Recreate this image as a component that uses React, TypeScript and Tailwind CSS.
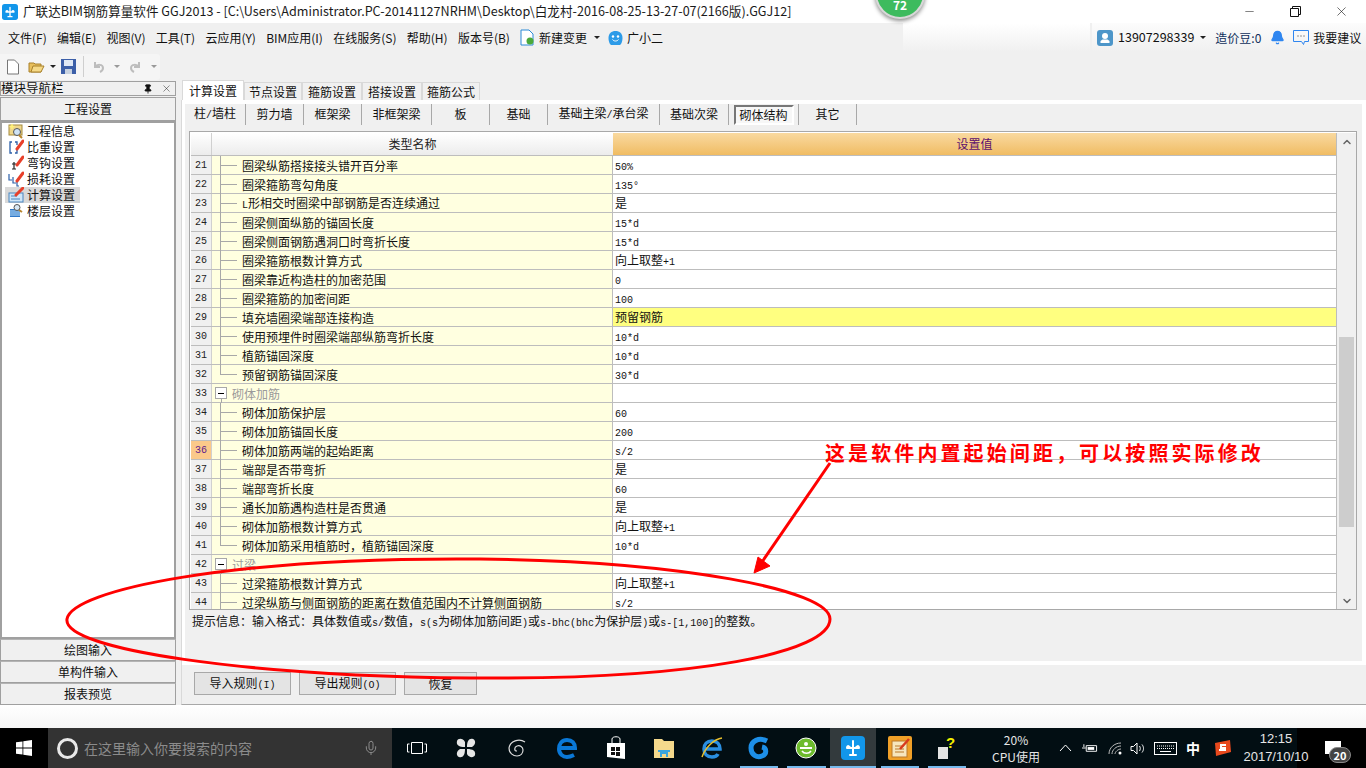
import type { ReactNode } from 'react';
import { Bell, ChevronDown, ChevronUp, Mic, Minus, Pin, X } from 'lucide-react';

const cjk = '"Noto Sans CJK SC", "Liberation Sans", sans-serif';

const menus = ['文件(F)', '编辑(E)', '视图(V)', '工具(T)', '云应用(Y)', 'BIM应用(I)', '在线服务(S)', '帮助(H)', '版本号(B)'];

const topTabs = [
  { label: '计算设置', w: 'w-[62px]' },
  { label: '节点设置', w: 'w-[58px]' },
  { label: '箍筋设置', w: 'w-[60px]' },
  { label: '搭接设置', w: 'w-[60px]' },
  { label: '箍筋公式', w: 'w-[58px]' },
];

const subTabs = [
  { label: '柱/墙柱', w: 'w-[61px]' },
  { label: '剪力墙', w: 'w-[58px]' },
  { label: '框架梁', w: 'w-[58px]' },
  { label: '非框架梁', w: 'w-[70px]' },
  { label: '板', w: 'w-[58px]' },
  { label: '基础', w: 'w-[58px]' },
  { label: '基础主梁/承台梁', w: 'w-[112px]' },
  { label: '基础次梁', w: 'w-[69px]' },
  { label: '砌体结构', w: 'w-[70px]' },
  { label: '其它', w: 'w-[58px]' },
];

type Row = { no: number; name: string; value?: string; group?: boolean; last?: boolean };

const rows: Row[] = [
  { no: 21, name: '圈梁纵筋搭接接头错开百分率', value: '50%' },
  { no: 22, name: '圈梁箍筋弯勾角度', value: '135°' },
  { no: 23, name: 'L形相交时圈梁中部钢筋是否连续通过', value: '是' },
  { no: 24, name: '圈梁侧面纵筋的锚固长度', value: '15*d' },
  { no: 25, name: '圈梁侧面钢筋遇洞口时弯折长度', value: '15*d' },
  { no: 26, name: '圈梁箍筋根数计算方式', value: '向上取整+1' },
  { no: 27, name: '圈梁靠近构造柱的加密范围', value: '0' },
  { no: 28, name: '圈梁箍筋的加密间距', value: '100' },
  { no: 29, name: '填充墙圈梁端部连接构造', value: '预留钢筋' },
  { no: 30, name: '使用预埋件时圈梁端部纵筋弯折长度', value: '10*d' },
  { no: 31, name: '植筋锚固深度', value: '10*d' },
  { no: 32, name: '预留钢筋锚固深度', value: '30*d', last: true },
  { no: 33, name: '砌体加筋', group: true },
  { no: 34, name: '砌体加筋保护层', value: '60' },
  { no: 35, name: '砌体加筋锚固长度', value: '200' },
  { no: 36, name: '砌体加筋两端的起始距离', value: 's/2' },
  { no: 37, name: '端部是否带弯折', value: '是' },
  { no: 38, name: '端部弯折长度', value: '60' },
  { no: 39, name: '通长加筋遇构造柱是否贯通', value: '是' },
  { no: 40, name: '砌体加筋根数计算方式', value: '向上取整+1' },
  { no: 41, name: '砌体加筋采用植筋时，植筋锚固深度', value: '10*d', last: true },
  { no: 42, name: '过梁', group: true },
  { no: 43, name: '过梁箍筋根数计算方式', value: '向上取整+1' },
  { no: 44, name: '过梁纵筋与侧面钢筋的距离在数值范围内不计算侧面钢筋', value: 's/2' },
];

const treeItems = [
  { label: '工程信息', icon: 'info' },
  { label: '比重设置', icon: 'weight' },
  { label: '弯钩设置', icon: 'hook' },
  { label: '损耗设置', icon: 'loss' },
  { label: '计算设置', icon: 'calc' },
  { label: '楼层设置', icon: 'floor' },
];

// 半角字符按等宽 6px 显示，和宋体的比例一致
function Mixed({ text }: { text: string }) {
  return (
    <span className="whitespace-nowrap">
      {text.split(/([\x00-\x7f°]+)/).map((part, i) =>
        i % 2 === 1 ? (
          <span key={i} className="font-['Liberation_Mono',monospace] text-[10px]">{part}</span>
        ) : (
          part
        ),
      )}
    </span>
  );
}

function AppLogo({ size = 16 }: { size?: number }) {
  return (
    <svg width={size} height={size} viewBox="0 0 24 24">
      <rect x="0" y="0" width="24" height="24" rx="4" fill="#1296ea" />
      <path d="M12 5v14M6 12h12M6 12c0-3 3-2 3 0M18 12c0-3-3-2-3 0M9 19h6" stroke="#fff" strokeWidth="2" fill="none" strokeLinecap="round" />
    </svg>
  );
}

function TreeIcon({ kind }: { kind: string }) {
  const pencil = <path d="M9 10 L15 2" stroke="#e8402a" strokeWidth="3" strokeLinecap="round" />;
  if (kind === 'info') {
    return (
      <svg width="16" height="16" viewBox="0 0 16 16">
        <rect x="1" y="2" width="13" height="10" fill="#efd78c" stroke="#a58a3c" />
        <circle cx="9" cy="9" r="3.5" fill="#cfe3f5" stroke="#555" />
        <path d="M11 12l3 3" stroke="#b8862e" strokeWidth="2" />
        <path d="M4 1v5M1.500 3.500h5" stroke="#fff27a" strokeWidth="1.500" />
      </svg>
    );
  }
  if (kind === 'weight') {
    return (
      <svg width="16" height="16" viewBox="0 0 16 16">
        <path d="M4 3H2v11h2M7 3h2v3M7 14h2v-5" stroke="#2c5fa8" strokeWidth="1.300" fill="none" />
        {pencil}
      </svg>
    );
  }
  if (kind === 'hook') {
    return (
      <svg width="16" height="16" viewBox="0 0 16 16">
        <path d="M6 7v7M4 9h4M4 14h4" stroke="#222" strokeWidth="1.200" fill="none" />
        {pencil}
      </svg>
    );
  }
  if (kind === 'loss') {
    return (
      <svg width="16" height="16" viewBox="0 0 16 16">
        <path d="M1 3v6h3M5 6v6h3M9 9v6h2" stroke="#2c5fa8" strokeWidth="1.200" fill="none" />
        {pencil}
      </svg>
    );
  }
  if (kind === 'calc') {
    return (
      <svg width="16" height="16" viewBox="0 0 16 16">
        <rect x="1" y="6" width="14" height="9" fill="#cfe6f8" stroke="#4a86c0" />
        <path d="M3 9h6M3 12h9" stroke="#4a86c0" />
        <path d="M8 8 L15 1" stroke="#e8402a" strokeWidth="3" strokeLinecap="round" />
      </svg>
    );
  }
  return (
    <svg width="16" height="16" viewBox="0 0 16 16">
      <path d="M2 6h10v8H2z" fill="#2f78c8" />
      <path d="M2 8h10M2 10h10M2 12h10" stroke="#bfe0fa" />
      <circle cx="9" cy="4.500" r="3" fill="#d8e8f5" stroke="#555" />
      <path d="M11 7l3 2" stroke="#b8862e" strokeWidth="2" />
    </svg>
  );
}

function Caret({ className = '', color = 'border-t-[#222]' }: { className?: string; color?: string }) {
  return <span className={`h-0 w-0 border-x-[3px] border-t-[3px] border-x-transparent ${color} ${className}`} />;
}

function TitleBar() {
  return (
    <div className="relative flex h-[23px] shrink-0 items-center bg-white pl-[2px] text-[12.6px] text-[#1a1a1a]">
      <AppLogo />
      <span className="ml-[5px] whitespace-nowrap">广联达BIM钢筋算量软件 GGJ2013 - [C:\Users\Administrator.PC-20141127NRHM\Desktop\白龙村-2016-08-25-13-27-07(2166版).GGJ12]</span>
      <div className="ml-auto mr-[2px] flex h-full items-center">
        <div className="flex w-[46px] justify-center"><Minus size={13} strokeWidth={1} /></div>
        <div className="flex w-[46px] justify-center">
          <svg width="11" height="11" viewBox="0 0 11 11" fill="none" stroke="#111">
            <path d="M.5 2.500h8v8h-8zM2.500 2.500v-2h8v8h-2" />
          </svg>
        </div>
        <div className="flex w-[46px] justify-center"><X size={15} strokeWidth={1} /></div>
      </div>
      {/* 悬浮的绿色网速球 */}
      <div className="absolute left-[875px] top-[-31px] flex h-[50px] w-[50px] items-end justify-center rounded-full border-2 border-[#d8d8d8] bg-[#3dbb5e] pb-[3px] text-[12px] font-bold text-white shadow-[0_2px_4px_rgba(0,0,0,0.45)]">
        72
      </div>
    </div>
  );
}

function MenuBar() {
  return (
    <div className="flex h-[29px] shrink-0 items-center bg-[#f0f0f0] pl-[8px] text-[12px] text-[#111]">
      <div className="flex w-[502px] shrink-0 justify-between whitespace-nowrap">
        {menus.map((m) => (
          <span key={m}>{m}</span>
        ))}
      </div>
      <svg className="ml-[10px]" width="14" height="17" viewBox="0 0 14 17">
        <path d="M1 1h8l4 4v11H1z" fill="#fff" stroke="#2b8ad6" />
        <circle cx="10" cy="12" r="3.500" fill="#4aa93a" />
      </svg>
      <span className="ml-[5px]">新建变更</span>
      <Caret className="ml-[7px]" />
      <svg className="ml-[7px]" width="17" height="16" viewBox="0 0 17 16">
        <path d="M8.500 1c4 0 7 2.500 7 7 0 3-1 6-2.500 7H4C2.500 14 1.500 11 1.500 8c0-4.500 3-7 7-7z" fill="#2d9be8" />
        <circle cx="6" cy="6.500" r="1.200" fill="#fff" />
        <circle cx="11" cy="6.500" r="1.200" fill="#fff" />
        <path d="M5.500 9.500c1.500 2 4.500 2 6 0" stroke="#fff" fill="none" />
      </svg>
      <span className="ml-[3px]">广小二</span>
      <div className="ml-auto h-full w-[187px] bg-gradient-to-b from-white to-[#f0f0f0]" />
      <div className="ml-[2px] flex h-full w-[274px] shrink-0 items-center bg-gradient-to-b from-[#fcfcfc] to-[#f0f0f0] pl-[5px]">
        <svg width="16" height="16" viewBox="0 0 16 16">
          <rect width="16" height="16" rx="3" fill="#4d96c9" />
          <circle cx="8" cy="6" r="3" fill="#fff" />
          <path d="M3.500 13h9v-2l-2-1.500h-5l-2 1.500z" fill="#fff" />
        </svg>
        <span className="ml-[5px] text-[12.5px]">13907298339</span>
        <Caret className="ml-[6px]" />
        <span className="ml-[9px] text-[#10305c]">造价豆:0</span>
        <Bell className="ml-[9px]" size={15} fill="#2f86f0" stroke="#2f86f0" />
        <svg className="ml-[8px]" width="16" height="16" viewBox="0 0 16 16" fill="none" stroke="#2f86f0">
          <path d="M.5 .5h15v11h-4l-1 3-2-3H.5z" />
          <path d="M4.500 6h1M7.500 6h1M10.500 6h1" stroke="#333" />
        </svg>
        <span className="ml-[4px]">我要建议</span>
      </div>
    </div>
  );
}

function ToolBar() {
  return (
    <div className="flex h-[29px] shrink-0 items-center bg-[#f0f0f0]">
      <div className="flex h-[26px] w-[160px] items-center rounded-r-[3px] bg-[#f5f5f5] pl-[6px]">
        <svg width="14" height="16" viewBox="0 0 14 16">
          <path d="M1.500 1h7l4 4v10h-11z" fill="#fff" stroke="#777" />
        </svg>
        <svg className="ml-[8px]" width="17" height="15" viewBox="0 0 17 15">
          <path d="M1 4h5l1 1h6v8H1z" fill="#e8bf5c" stroke="#a8802a" />
          <path d="M3 13l2-6h11l-3 6z" fill="#f5d987" stroke="#a8802a" />
        </svg>
        <Caret className="ml-[5px]" />
        <svg className="ml-[5px]" width="15" height="15" viewBox="0 0 15 15">
          <rect width="15" height="15" fill="#3c5fa8" />
          <rect x="3" y="1" width="9" height="6" fill="#dfe8f5" />
          <rect x="4" y="10" width="7" height="5" fill="#c8d2e0" />
        </svg>
        <span className="ml-[7px] h-[21px] w-px bg-[#cfcfcf]" />
        <div className="ml-[8px] flex items-center text-[#bdbdbd]">
          <svg width="14" height="14" viewBox="0 0 14 14" fill="none" stroke="currentColor" strokeWidth="2">
            <path d="M3 2v5h5M3 7c2-3 8-3 8 1 0 2-1 3-3 4" />
          </svg>
          <Caret className="ml-[8px]" color="border-t-[#999]" />
          <svg className="ml-[8px]" width="14" height="14" viewBox="0 0 14 14" fill="none" stroke="currentColor" strokeWidth="2">
            <path d="M11 2v5H6M11 7C9 4 3 4 3 8c0 2 1 3 3 4" />
          </svg>
          <Caret className="ml-[9px]" color="border-t-[#999]" />
        </div>
      </div>
    </div>
  );
}

function NavButton({ label }: { label: string }) {
  return (
    <div className="flex h-[22px] items-center justify-center border border-[#a0a0a0] border-t-[#b4b4b4] bg-[#f0f0f0] text-[12px] text-[#111]">
      {label}
    </div>
  );
}

function LeftPanel() {
  return (
    <aside className="flex w-[176px] shrink-0 flex-col">
      <div className="flex h-[15px] items-center border border-[#a0a0a0] bg-[#f0f0f0] text-[12.5px] leading-none text-[#111]">
        <span>模块导航栏</span>
        <Pin className="ml-auto" size={10} strokeWidth={2} fill="#111" />
        <X className="ml-[8px] mr-[3px]" size={11} strokeWidth={1} />
      </div>
      <div className="mt-px flex h-[24px] items-center justify-center border border-[#a0a0a0] bg-[#f0f0f0] text-[12px] text-[#111]">工程设置</div>
      <div className="h-[518px] border-2 border-[#a0a0a0] bg-white pl-[3px]">
        {treeItems.map((t) => (
          <div key={t.label} className={`flex h-[16px] w-[75px] items-center ${t.label === '计算设置' ? 'bg-[#d9d9d9]' : ''}`}>
            <span className="flex w-[22px] shrink-0 justify-center"><TreeIcon kind={t.icon} /></span>
            <span className="whitespace-nowrap text-[12px] leading-[16px] text-[#111]">{t.label}</span>
          </div>
        ))}
      </div>
      <NavButton label="绘图输入" />
      <NavButton label="单构件输入" />
      <NavButton label="报表预览" />
    </aside>
  );
}

function GridRow({ row }: { row: Row }) {
  const active = row.no === 36;
  const highlight = row.no === 29;
  return (
    <div className="flex h-[19px] shrink-0 border-b border-[#bdbdbd]">
      <div className={`flex w-[21px] shrink-0 items-center justify-center border-r border-[#d0d0d0] font-['Liberation_Mono',monospace] text-[10px] ${active ? 'bg-[#fbc98a] text-[#5c1a8c]' : 'bg-[#f0f0f0] text-[#222]'}`}>
        {row.no}
      </div>
      <div className="relative flex w-[401px] shrink-0 items-center border-r border-[#bdbdbd] bg-[#ffffe0] pl-[30px] pt-px text-[12px] text-[#111]">
        {row.group ? (
          <>
            <span className="absolute left-[3px] top-[3px] flex h-[12px] w-[12px] items-center justify-center border border-[#a8a8a8] bg-white">
              <span className="h-px w-[6px] bg-black" />
            </span>
            <span className="absolute left-[9px] top-[15px] h-[4px] w-px bg-[#a8a8a8]" />
            <span className="ml-[-10px] text-[#9a9a9a]">{row.name}</span>
          </>
        ) : (
          <>
            <span className={`absolute left-[8px] top-0 w-px bg-[#a8a8a8] ${row.last ? 'h-[9px]' : 'h-[19px]'}`} />
            <span className="absolute left-[8px] top-[9px] h-px w-[17px] bg-[#a8a8a8]" />
            <Mixed text={row.name} />
          </>
        )}
      </div>
      <div className={`flex flex-1 items-center pl-[2px] text-[12px] text-[#111] ${highlight ? 'bg-[#ffff80]' : 'bg-white'}`}>
        {row.value && <Mixed text={row.value} />}
      </div>
    </div>
  );
}

function SettingsGrid() {
  return (
    <div className="ml-[4px] mr-[5px] mt-[6px] flex h-[479px] shrink-0 border border-[#a8a8a8] bg-white pl-px pt-px">
      <div className="flex min-w-0 flex-1 flex-col overflow-hidden">
        <div className="flex h-[23px] shrink-0 border-b border-[#bdbdbd]">
          <div className="w-[21px] shrink-0 border-r border-[#d0d0d0] bg-gradient-to-b from-white to-[#ececec]" />
          <div className="flex w-[401px] shrink-0 items-center justify-center bg-gradient-to-b from-white to-[#ececec] text-[12px] text-[#222]">类型名称</div>
          <div className="flex flex-1 items-center justify-center bg-gradient-to-b from-[#f9d99f] to-[#f0bc62] text-[12px] text-[#5c0f6e]">设置值</div>
        </div>
        {rows.map((r) => (
          <GridRow key={r.no} row={r} />
        ))}
      </div>
      <div className="flex w-[20px] shrink-0 flex-col border-l border-[#bdbdbd] bg-[#f0f0f0] pl-[2px] pr-[2px]">
        <div className="flex h-[17px] items-center justify-center text-[#666]"><ChevronUp size={12} strokeWidth={3} /></div>
        <div className="mt-[187px] h-[190px] bg-[#cdcdcd]" />
        <div className="mt-auto flex h-[17px] items-center justify-center text-[#666]"><ChevronDown size={12} strokeWidth={3} /></div>
      </div>
    </div>
  );
}

function RulePanel() {
  const buttons = [
    { label: '导入规则(I)', w: 'w-[97px]' },
    { label: '导出规则(O)', w: 'w-[97px]' },
    { label: '恢复', w: 'w-[73px]' },
  ];
  return (
    <main className="ml-[5px] flex min-w-0 flex-1 flex-col">
      <div className="flex h-[19px] shrink-0 items-end pl-px text-[12px] text-[#111]">
        {topTabs.map((t, i) => (
          <div
            key={t.label}
            className={`flex items-center justify-center border border-b-0 border-[#d9d9d9] ${t.w} ${i === 0 ? 'h-[20px] bg-white' : 'h-[18px] bg-[#f0f0f0]'}`}
          >
            {t.label}
          </div>
        ))}
      </div>
      <div className="flex min-h-0 flex-1 flex-col border-b border-l border-[#a8a8a8] border-l-[#d9d9d9] bg-white">
        <div className="ml-[3px] mr-[4px] mt-[4px] flex h-[557px] flex-col bg-[#f0f0f0]">
          <div className="flex h-[21px] shrink-0 text-[12px] text-[#111]">
            {subTabs.map((t) => (
              <div key={t.label} className={`flex shrink-0 items-center justify-center border-r border-[#a8a8a8] ${t.w} ${t.label === '砌体结构' ? '' : 'pb-[2px]'}`}>
                {t.label === '砌体结构' ? (
                  <span className="flex h-[20px] w-[60px] items-center justify-center border-2 border-[#777] border-b-white border-r-white bg-[#f7f7f7]">{t.label}</span>
                ) : (
                  <Mixed text={t.label} />
                )}
              </div>
            ))}
          </div>
          <SettingsGrid />
          <p className="ml-[7px] mt-[2px] text-[12px] text-[#111]">
            <Mixed text="提示信息：输入格式：具体数值或s/数值，s(s为砌体加筋间距)或s-bhc(bhc为保护层)或s-[1,100]的整数。" />
          </p>
        </div>
        <div className="mt-[4px] flex flex-1 items-start gap-[8px] bg-[#f0f0f0] pl-[12px] pt-[7px]">
          {buttons.map((b) => (
            <div key={b.label} className={`flex h-[23px] items-center justify-center border border-[#a8a8a8] bg-[#e4e4e4] text-[12px] text-[#111] ${b.w}`}>
              <Mixed text={b.label} />
            </div>
          ))}
        </div>
      </div>
    </main>
  );
}

function Annotation() {
  return (
    <>
      <svg className="pointer-events-none absolute left-0 top-0" width="1366" height="768" viewBox="0 0 1366 768" fill="none">
        <path d="M67 619C72 590 230 557 480 559C680 561 830 590 830 619C830 652 700 680 470 678C250 676 62 650 67 619Z" stroke="#f00" strokeWidth="3" />
        <path d="M830 463L762 562" stroke="#f00" strokeWidth="3" />
        <path d="M754 573L758 557L770 566Z" fill="#f00" stroke="#f00" />
      </svg>
      <div className="absolute left-[825px] top-[438px] whitespace-nowrap font-['Noto_Sans_CJK_SC',serif] text-[20px] font-semibold tracking-[3.1px] text-[#f00]">
        这是软件内置起始间距，可以按照实际修改
      </div>
    </>
  );
}

function TaskIcon({ w, running, active, children }: { w: string; running?: string; active?: boolean; children: ReactNode }) {
  return (
    <div className={`relative flex h-full shrink-0 items-center justify-center ${w} ${active ? 'bg-[#333a3d]' : ''}`}>
      {children}
      {running && <span className={`absolute bottom-0 h-[2px] bg-[#76b9ed] ${running}`} />}
    </div>
  );
}

function Taskbar() {
  return (
    <footer className="flex h-[40px] shrink-0 items-center bg-[#020e13] text-white">
      <div className="flex h-full w-[48px] shrink-0 items-center justify-center bg-black">
        <svg width="16" height="16" viewBox="0 0 16 16" fill="#fff">
          <path d="M0 2.300 6.500 1.400v6.200H0zM7.300 1.300 16 0v7.600H7.300zM0 8.400h6.500v6.200L0 13.700zM7.300 8.400H16V16l-8.700-1.300z" />
        </svg>
      </div>
      <div className="flex h-full w-[344px] shrink-0 items-center bg-[#333333] pl-[9px]">
        <span className="h-[21px] w-[21px] rounded-full border-[3px] border-[#e8e8e8]" />
        <span className="ml-[6px] text-[14px] text-[#8b8b8b]">在这里输入你要搜索的内容</span>
        <Mic className="ml-auto mr-[13px] text-[#8b8b8b]" size={16} strokeWidth={1.5} />
      </div>
      <TaskIcon w="w-[49px]">
        <svg width="20" height="14" viewBox="0 0 20 14" fill="none" stroke="#fff">
          <path d="M4.500 1.500h11v11h-11zM2.500 3H.5v8h2M17.500 3h2v8h-2" />
        </svg>
      </TaskIcon>
      <TaskIcon w="w-[50px]">
        <svg width="24" height="24" viewBox="0 0 24 24" fill="#e6e6e6">
          <path d="M11 11C5 11 2 9 3 5c1-3 6-3 8 1zM13 11c0-6 2-9 6-8 3 1 3 6-1 8zM13 13c6 0 9 2 8 6-1 3-6 3-8-1zM11 13c0 6-2 9-6 8-3-1-3-6 1-8z" />
        </svg>
      </TaskIcon>
      <TaskIcon w="w-[51px]">
        <svg width="20" height="20" viewBox="0 0 20 20" fill="none" stroke="#ddd" strokeWidth="1.200">
          <path d="M18 4C12 0 3 3 2 10c0 5 4 8 8 8 4 0 6-3 6-6s-3-5-6-4-3 5 0 5" />
        </svg>
      </TaskIcon>
      <TaskIcon w="w-[50px]">
        <svg width="20" height="22" viewBox="0 0 20 22" fill="none" stroke="#0a78d7" strokeWidth="4">
          <path d="M2 11h16c0-5-3-8-8-8S2 7 2 12c0 5 4 8 8 8 3 0 5-1 7-2" />
        </svg>
      </TaskIcon>
      <TaskIcon w="w-[48px]">
        <svg width="20" height="24" viewBox="0 0 20 24">
          <path d="M1 7h18v16l-18-2z" fill="#fff" />
          <path d="M6 7V3c0-3 8-3 8 0v4" stroke="#fff" fill="none" />
          <path d="M5 11h4v4H5zM10 11h4v4h-4zM5 16h4v3H5zM10 16h4v4h-4z" fill="#111" />
        </svg>
      </TaskIcon>
      <TaskIcon w="w-[48px]">
        <svg width="22" height="20" viewBox="0 0 22 20">
          <path d="M1 1h8l2 2h10v17H1z" fill="#f5d98c" />
          <path d="M7 13h8v6h-2v-3H9v3H7z" fill="#3aa5e0" />
          <path d="M5 12h12v2H5z" fill="#3aa5e0" />
        </svg>
      </TaskIcon>
      <TaskIcon w="w-[47px]">
        <svg width="24" height="24" viewBox="0 0 24 24" fill="none">
          <path d="M4 13h16c0-5-3-8-8-8s-8 3-8 8 3 8 8 8c3 0 5-1 6-3" stroke="#2a8ee0" strokeWidth="3.500" />
          <path d="M2 21C5 12 14 3 22 2" stroke="#e8c030" strokeWidth="1.500" />
        </svg>
      </TaskIcon>
      <TaskIcon w="w-[47px]" running="left-[5px] right-[4px]">
        <svg width="24" height="24" viewBox="0 0 24 24" fill="none" stroke="#1d8fe8" strokeWidth="5">
          <path d="M20 5C12 1 4 5 4 12s6 10 11 8 5-8 0-9" />
        </svg>
      </TaskIcon>
      <TaskIcon w="w-[48px]" running="left-[5px] right-[4px]">
        <svg width="22" height="22" viewBox="0 0 22 22">
          <circle cx="11" cy="11" r="10" fill="#6dbb2d" stroke="#fff" />
          <path d="M5 11h12" stroke="#fff" strokeWidth="2" />
          <path d="M7 14c2 3 7 3 9 0" stroke="#fff" strokeWidth="1.500" fill="none" />
          <circle cx="11" cy="7" r="2" fill="#fff" />
        </svg>
      </TaskIcon>
      <TaskIcon w="w-[46px]" active running="left-0 right-0">
        <AppLogo size={24} />
      </TaskIcon>
      <TaskIcon w="w-[48px]" running="left-[5px] right-[5px]">
        <svg width="24" height="24" viewBox="0 0 24 24">
          <rect width="24" height="24" rx="2" fill="#f0a028" />
          <rect x="4" y="5" width="15" height="16" fill="#f7e6bd" stroke="#b9782a" />
          <path d="M7 10h9M7 13h9M7 16h9" stroke="#b9782a" />
          <path d="M12 13L21 3" stroke="#d83a1e" strokeWidth="2.500" />
        </svg>
      </TaskIcon>
      <TaskIcon w="w-[46px]" running="left-[4px] right-[4px]">
        <span className="relative h-[22px] w-[18px]">
          <span className="absolute bottom-0 left-0 h-[12px] w-[10px] bg-[#e4e4e4]" />
          <span className="absolute left-[8px] top-[-3px] font-['Liberation_Sans',sans-serif] text-[15px] font-bold leading-[18px] text-[#f5f000]">?</span>
        </span>
      </TaskIcon>
      <div className="ml-[7px] flex w-[78px] shrink-0 flex-col items-center text-[12px] leading-[17px] text-[#e6e6e6]">
        <span>20%</span>
        <span>CPU使用</span>
      </div>
      <div className="ml-[4px] flex shrink-0 items-center">
        <svg width="13" height="8" viewBox="0 0 13 8" fill="none" stroke="#fff"><path d="M1 7l5.500-6L12 7" /></svg>
        <svg className="ml-[10px]" width="16" height="12" viewBox="0 0 17 12" fill="none" stroke="#fff">
          <path d="M4.500 3.500h11v6h-11z" /><path d="M6 5h7v3H6z" fill="#fff" stroke="none" /><path d="M0 6h4M2 2v3" />
        </svg>
        <svg className="ml-[10px]" width="14" height="13" viewBox="0 0 14 13" fill="none" stroke="#bbb">
          <path d="M1 12C1 6 6 1 13 1M4 12c0-4 4-8 9-8M7 12c0-2 3-5 6-5" />
          <circle cx="12" cy="11" r="1.500" fill="#fff" stroke="none" />
        </svg>
        <svg className="ml-[8px]" width="16" height="13" viewBox="0 0 16 13" fill="none" stroke="#fff">
          <path d="M1 4.500h2.500L7 1v11L3.500 8.500H1zM9.500 4c1 1.500 1 3.500 0 5M12 2.500c2 2.500 2 5.500 0 8" />
        </svg>
        <svg className="ml-[8px]" width="23" height="13" viewBox="0 0 23 13" fill="none" stroke="#fff">
          <rect x=".5" y=".5" width="22" height="12" />
          <path d="M3 4h17M3 6.500h17" strokeDasharray="1 1" /><path d="M6 9.500h11" />
        </svg>
        <span className="ml-[9px] text-[14px] font-bold">中</span>
        <svg className="ml-[14px]" width="17" height="16" viewBox="0 0 17 16">
          <path d="M1 3l15-3 1 12-15 4z" fill="#e8491d" />
          <path d="M12 5H7v3h4v2H5" stroke="#fff" strokeWidth="2" fill="none" />
        </svg>
      </div>
      <div className="relative z-10 ml-[12px] flex w-[66px] shrink-0 flex-col items-center whitespace-nowrap font-['Liberation_Sans',sans-serif] text-[13px] leading-[18px] text-[#e6e6e6]">
        <span>12:15</span>
        <span>2017/10/10</span>
      </div>
      <div className="relative ml-[-12px] h-full w-[69px] shrink-0 bg-black">
        <svg className="absolute left-[28px] top-[13px]" width="16" height="13" viewBox="0 0 16 13" fill="#fff">
          <path d="M0 0h16v13H0z" />
        </svg>
        <span className="absolute left-[32px] top-[19px] flex h-[16px] w-[22px] items-center justify-center rounded-full border border-[#888] bg-[#444] text-[11px] font-bold">20</span>
      </div>
    </footer>
  );
}

export default function App() {
  return (
    <div className="relative flex h-[768px] w-[1366px] flex-col overflow-hidden bg-[#f0f0f0]" style={{ fontFamily: cjk }}>
      <TitleBar />
      <MenuBar />
      <ToolBar />
      <div className="flex h-[624px] shrink-0">
        <LeftPanel />
        <RulePanel />
      </div>
      <div className="h-[23px] shrink-0 bg-gradient-to-b from-white to-[#f6f6f6]" />
      <Taskbar />
      <Annotation />
    </div>
  );
}
